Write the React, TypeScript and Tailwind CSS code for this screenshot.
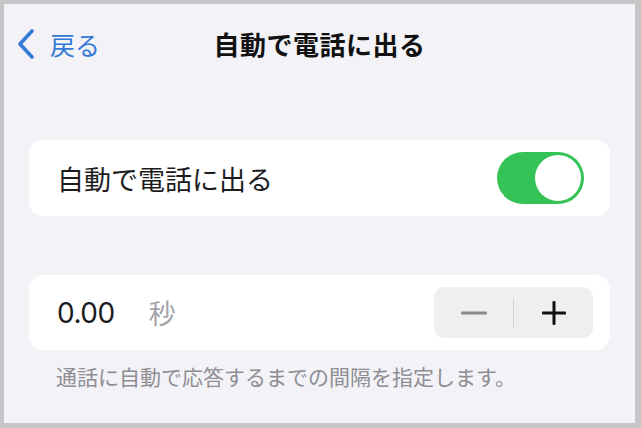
import * as React from "react";

const font = {
  fontFamily: '"Noto Sans CJK JP", "Noto Sans", sans-serif',
};

const Toggle: React.FC = () => (
  <div className="flex h-[52px] w-[87px] items-center justify-end rounded-full bg-[#35c257] p-[3px]">
    <div className="h-[46px] w-[46px] rounded-full bg-white" />
  </div>
);

const App: React.FC = () => {
  return (
    <div
      className="flex h-[428px] w-[641px] flex-col border-4 border-r-[6px] border-b-[5px] border-[#c6c6c8] bg-[#f2f2f7]"
      style={font}
    >
      <header className="grid h-[80px] grid-cols-[1fr_auto_1fr] items-center px-3">
        <button className="flex items-center gap-[14px] text-[#3478d8]">
          <svg width="20" height="30" viewBox="0 0 20 30" fill="none">
            <path
              d="M16 2 L4 15 L16 28"
              stroke="currentColor"
              strokeWidth="3.6"
              strokeLinecap="round"
              strokeLinejoin="round"
            />
          </svg>
          <span className="text-[25px] leading-none">戻る</span>
        </button>
        <h1 className="text-[26px] font-bold leading-none tracking-[0.5px] text-[#111]">
          自動で電話に出る
        </h1>
        <div />
      </header>

      <div className="mx-[25px] mt-[56px] flex h-[76px] items-center justify-between rounded-[14px] bg-white pl-[28px] pr-[26px]">
        <span className="text-[27px] leading-none text-[#1c1c1e]">
          自動で電話に出る
        </span>
        <Toggle />
      </div>

      <div className="mx-[25px] mt-[59px] flex h-[75px] items-center justify-between rounded-[14px] bg-white pl-[28px] pr-[17px]">
        <div className="flex items-center gap-[34px]">
          <span className="font-['Inter'] text-[28px] leading-none tracking-[-0.5px] text-[#1c1c1e]">
            0.00
          </span>
          <span className="text-[27px] leading-none text-[#a4a4a8]">秒</span>
        </div>
        <div className="flex h-[51px] w-[159px] items-center rounded-[10px] bg-[#efeff0]">
          <div className="flex flex-1 items-center justify-center">
            <svg width="26" height="4" viewBox="0 0 26 4">
              <rect x="0" y="0.5" width="26" height="3" rx="1" fill="#8a8a8e" />
            </svg>
          </div>
          <div className="h-[30px] w-px bg-[#d4d4d8]" />
          <div className="flex flex-1 items-center justify-center">
            <svg width="24" height="24" viewBox="0 0 24 24">
              <rect x="0" y="10.5" width="24" height="3" rx="1" fill="#111" />
              <rect x="10.5" y="0" width="3" height="24" rx="1" fill="#111" />
            </svg>
          </div>
        </div>
      </div>

      <p className="mt-[12px] pl-[52px] text-[21px] leading-[28px] text-[#8e8e93]">
        通話に自動で応答するまでの間隔を指定します。
      </p>
    </div>
  );
};

export default App;
